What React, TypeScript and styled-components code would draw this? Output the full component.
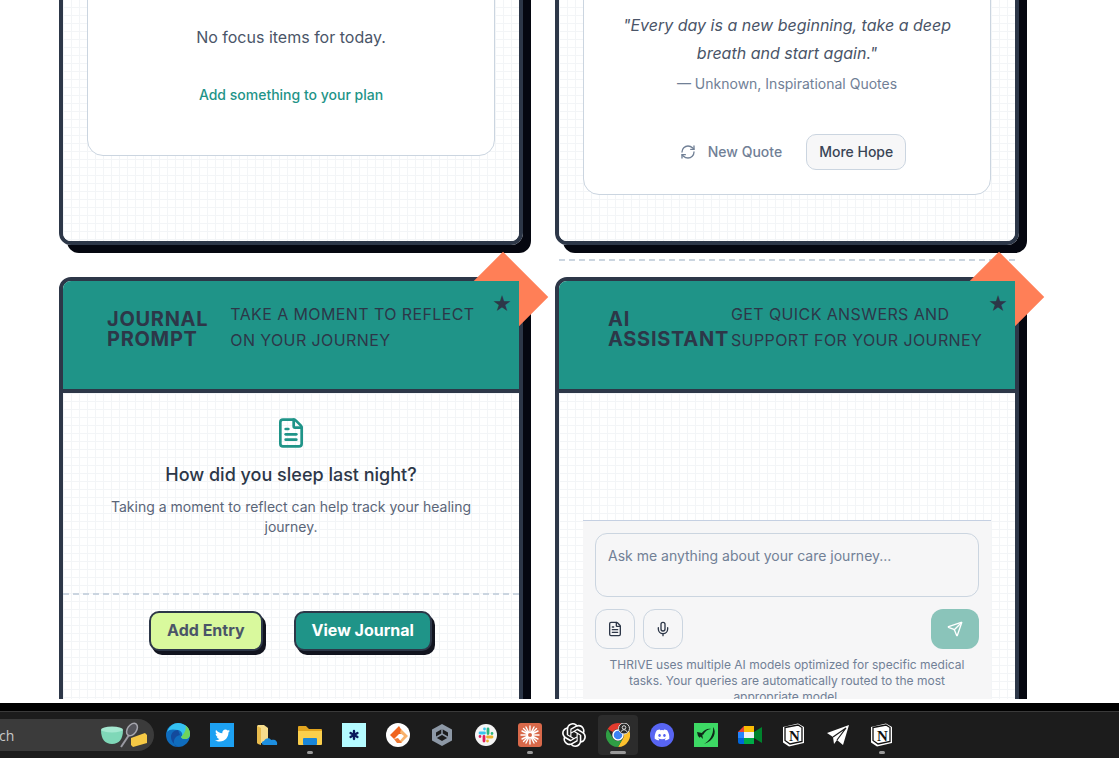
import { createGlobalStyle } from "styled-components";
import styled from "styled-components";
import { FileText, Mic, RefreshCw, Send, Asterisk } from "lucide-react";
import { FaDiscord, FaTwitter } from "react-icons/fa";
import { SiOpenai } from "react-icons/si";

const GlobalStyle = createGlobalStyle`
  html, body {
    margin: 0;
    padding: 0;
    background: #fff;
    font-family: Inter, "Liberation Sans", sans-serif;
  }
`;

const Screen = styled.div`
  height: 758px;
  display: flex;
  flex-direction: column;
  overflow: hidden;
`;

const Viewport = styled.div`
  height: 699px;
  margin-bottom: 4px;
  flex: none;
  overflow: hidden;
`;

const CardGrid = styled.div`
  display: grid;
  grid-template-columns: 464px 464px;
  grid-template-rows: 306px 480px;
  gap: 32px;
  margin: -61px 0 0 59px;
`;

const Card = styled.section<{ $divider?: boolean }>`
  position: relative;
  display: flex;
  flex-direction: column;
  box-sizing: border-box;
  border: 4px solid #2d3748;
  border-radius: 12px;
  box-shadow: 8px 8px 0 #050710;

  &::after {
    content: "";
    display: ${(p) => (p.$divider ? "block" : "none")};
    position: absolute;
    left: 0;
    right: 0;
    bottom: -20px;
    border-top: 2px dashed #cbd5e0;
  }
`;

const Diamond = styled.div`
  position: absolute;
  top: -16px;
  right: -16px;
  width: 64px;
  height: 64px;
  background: #ff7f57;
  transform: rotate(45deg);
`;

const Header = styled.header<{ $inset: number; $gap: number }>`
  position: relative;
  z-index: 1;
  flex: none;
  height: 108px;
  box-sizing: content-box;
  display: flex;
  align-items: flex-start;
  gap: ${(p) => p.$gap}px;
  padding-left: ${(p) => p.$inset}px;
  background: #1f9488;
  border-bottom: 4px solid #2d3748;
  border-top-left-radius: 8px;
  color: #2d3748;
`;

const HeaderTitle = styled.h2`
  flex: none;
  width: min-content;
  margin: 28px 0 0;
  font-size: 20px;
  line-height: 20px;
  font-weight: 700;
  letter-spacing: 0.7px;
  text-transform: uppercase;
`;

const HeaderSub = styled.p`
  width: 262px;
  margin: 20px 0 0;
  font-size: 16px;
  line-height: 26px;
  letter-spacing: 0.4px;
  text-transform: uppercase;
`;

const Star = styled.span`
  position: absolute;
  top: 10px;
  right: 7px;
  font-family: "DejaVu Sans", sans-serif;
  font-size: 22px;
  line-height: 26px;
`;

const Body = styled.div<{ $pad?: boolean }>`
  flex: 1;
  min-height: 0;
  display: flex;
  flex-direction: column;
  padding: ${(p) => (p.$pad ? "24px 24px 0" : "0")};
  background-color: #fff;
  background-image: linear-gradient(#f3f5f7 1px, transparent 1px),
    linear-gradient(90deg, #f3f5f7 1px, transparent 1px);
  background-size: 8px 8px;
  border-radius: 0 0 8px 8px;
`;

const InnerBox = styled.div<{ $quote?: boolean }>`
  box-sizing: border-box;
  background: #fff;
  border: 1px solid #cbd5e0;
  border-radius: 16px;
  text-align: center;
  padding: ${(p) => (p.$quote ? "43px 24px 24px" : "57px 24px 50px")};
`;

const EmptyText = styled.p`
  margin: 0;
  font-size: 16px;
  line-height: 24px;
  color: #4a5568;
`;

const PlanLink = styled.a`
  display: block;
  margin-top: 36px;
  font-size: 14px;
  line-height: 20px;
  font-weight: 500;
  color: #1f9488;
`;

const Quote = styled.p`
  margin: 0;
  font-size: 16px;
  line-height: 28px;
  font-style: italic;
  color: #4a5568;
`;

const Attribution = styled.p`
  margin: 7px 0 0;
  font-size: 14px;
  line-height: 20px;
  color: #718096;
`;

const QuoteActions = styled.div`
  display: flex;
  justify-content: center;
  gap: 12px;
  margin-top: 40px;
`;

const GhostButton = styled.button`
  display: flex;
  align-items: center;
  gap: 12px;
  height: 36px;
  padding: 0 12px 1px;
  border: none;
  background: transparent;
  font: 500 14px Inter, sans-serif;
  color: #718096;
`;

const SoftButton = styled.button`
  height: 36px;
  padding: 0 12px 1px;
  border: 1px solid #cbd5e0;
  border-radius: 10px;
  background: #f7f7f8;
  font: 500 14px Inter, sans-serif;
  color: #3a4556;
`;

const Prompt = styled.div`
  display: flex;
  flex-direction: column;
  align-items: center;
  height: 200px;
  box-sizing: border-box;
  padding: 24px 24px 0;
  color: #1f9488;
  text-align: center;
`;

const PromptTitle = styled.h3`
  margin: 12px 0 0;
  font-size: 18px;
  line-height: 28px;
  font-weight: 500;
  color: #2d3748;
`;

const PromptText = styled.p`
  margin: 8px 0 0;
  font-size: 14px;
  line-height: 20px;
  color: #5a6578;
`;

const PromptActions = styled.div`
  display: flex;
  justify-content: center;
  gap: 31px;
  padding: 16px 1px 0 0;
  border-top: 2px dashed #cbd5e0;
`;

const ChunkyButton = styled.button<{ $primary?: boolean }>`
  height: 40px;
  padding: 0 16px 2px;
  border: 2px solid #2d3748;
  border-radius: 10px;
  box-shadow: 3px 4px 0 #12141f;
  background: ${(p) => (p.$primary ? "#1f9488" : "#d9f99d")};
  color: ${(p) => (p.$primary ? "#fff" : "#4a5568")};
  font: 700 16px Inter, sans-serif;
`;

const Composer = styled.div`
  margin: 127px 24px 0;
  padding: 12px 12px 0;
  background: #f6f6f7;
  border-top: 1px solid #c5d0e2;
`;

const FakeTextarea = styled.div`
  box-sizing: border-box;
  height: 64px;
  padding: 12px;
  border: 1px solid #cbd5e0;
  border-radius: 12px;
  font-size: 14px;
  line-height: 20px;
  color: #718096;
`;

const ComposerRow = styled.div`
  display: flex;
  gap: 8px;
  margin-top: 12px;
`;

const ToolButton = styled.button`
  display: flex;
  align-items: center;
  justify-content: center;
  width: 40px;
  height: 40px;
  padding: 0;
  background: transparent;
  border: 1px solid #cbd5e0;
  border-radius: 12px;
  color: #2d3748;
`;

const SendButton = styled.button`
  display: flex;
  align-items: center;
  justify-content: center;
  width: 48px;
  height: 40px;
  margin-left: auto;
  padding: 0;
  border: none;
  border-radius: 12px;
  background: #8ac4ba;
  color: #fff;
`;

const Disclaimer = styled.p`
  margin: 8px 0 0;
  font-size: 12px;
  line-height: 16px;
  text-align: center;
  color: #718096;
`;

const WindowEdge = styled.div`
  flex: none;
  height: 8px;
  background: #000;
`;

const Taskbar = styled.footer`
  flex: 1;
  display: flex;
  align-items: center;
  border-top: 1px solid #3a3a3a;
  background: #1c1c1c;
`;

const SearchPill = styled.div`
  flex: none;
  display: flex;
  align-items: center;
  justify-content: space-between;
  box-sizing: border-box;
  width: 214px;
  height: 32px;
  margin: 0 2px 0 -60px;
  padding: 0 6px 0 30px;
  border-radius: 16px;
  background: #3b3b3b;
  font: 14px "Open Sans", sans-serif;
  color: #c8c8c8;
`;

const TaskIcon = styled.div<{ $active?: boolean; $dot?: "short" | "long" }>`
  position: relative;
  flex: none;
  width: 44px;
  height: 40px;
  display: flex;
  align-items: center;
  justify-content: center;

  &::before {
    content: "";
    display: ${(p) => (p.$active ? "block" : "none")};
    position: absolute;
    inset: 0 2px;
    border-radius: 4px;
    background: #2c2c2c;
  }

  &::after {
    content: "";
    display: ${(p) => (p.$dot ? "block" : "none")};
    position: absolute;
    left: 50%;
    bottom: 1px;
    width: ${(p) => (p.$dot === "long" ? 16 : 6)}px;
    height: 3px;
    margin-left: ${(p) => (p.$dot === "long" ? -8 : -3)}px;
    border-radius: 2px;
    background: #9a9a9a;
  }

  svg {
    position: relative;
  }
`;

const IconTile = styled.div<{ $bg: string; $round?: boolean }>`
  position: relative;
  display: flex;
  align-items: center;
  justify-content: center;
  width: 24px;
  height: 24px;
  border-radius: ${(p) => (p.$round ? "50%" : "0")};
  background: ${(p) => p.$bg};
  color: #fff;
`;

const BakingArt = () => (
  <svg width="48" height="28" viewBox="0 0 48 28">
    <path d="M1 9h22c0 9-4 14-11 14S1 18 1 9z" fill="#7fd8b8" />
    <ellipse cx="12" cy="8.500" rx="11" ry="3" fill="#a4e8d0" />
    <path d="M21 26l8-12" stroke="#9a9aa2" strokeWidth="2" />
    <ellipse cx="32" cy="8.500" rx="4.500" ry="7" transform="rotate(35 32 8.500)" fill="#55555c" stroke="#a5a5ad" strokeWidth="1.500" />
    <path d="M31 17l14-5 2 2v8l-14 4-2-2z" fill="#f6c945" />
  </svg>
);

const EdgeIcon = () => (
  <svg width="24" height="24" viewBox="0 0 24 24">
    <circle cx="12" cy="12" r="12" fill="#0f6cbd" />
    <path d="M1 9C3 3 8 0 12 0c7 0 12 5 12 11 0 3-2 5-5 5-2 0-4-1-4-2 2-1 2-6-3-7C7 6 3 6 1 9z" fill="#35c1f1" />
    <path d="M15 14c1 2 3 2 4 2 3 0 5-2 5-5 0-4-2-7-5-9 2 3 0 8-4 12z" fill="#6fd35c" />
    <path d="M12 7c-4 0-7 3-7 7 0 4 3 8 8 10-5 0-7-6-3-10 1-1 3-2 4-2z" fill="#134a9c" />
  </svg>
);

const CloudFolderIcon = () => (
  <svg width="24" height="24" viewBox="0 0 24 24">
    <path d="M3 3l1-1h6l4 3v15H4l-1-1z" fill="#f6dc8c" />
    <path d="M3 3l4 2v17l-3-1-1-1z" fill="#e8bb4c" />
    <path d="M10 22c-3 0-3-4 0-4 1-3 6-4 7-1 4-1 7 1 6 5z" fill="#1d8fe0" />
  </svg>
);

const FolderIcon = () => (
  <svg width="24" height="24" viewBox="0 0 24 24">
    <path d="M0 4a1 1 0 0 1 1-1h7l3 3h12a1 1 0 0 1 1 1v3H0z" fill="#e2a51f" />
    <path d="M0 8h24v13a1 1 0 0 1-1 1H1a1 1 0 0 1-1-1z" fill="#fbcf4c" />
    <rect x="5" y="15" width="14" height="7" rx="1" fill="#1a86d8" />
  </svg>
);

const OrangeMarkIcon = () => (
  <svg width="24" height="24" viewBox="0 0 24 24">
    <circle cx="12" cy="12" r="12" fill="#fff" />
    <path d="M13 3L4 12l4 4 5-5h5z" fill="#f0641e" />
    <path d="M15 6l7 7-6 6-4 1 6-7-4-3z" fill="#f9b26a" />
    <path d="M8 16l3 4h5l-4-5z" fill="#ee7a35" />
  </svg>
);

const CubeHexIcon = () => (
  <svg width="22" height="24" viewBox="0 0 22 24" fill="none">
    <path d="M11 1l10 5.500v11L11 23 1 17.500v-11z" fill="#8d98a6" />
    <path d="M11 6l6 3.500v5L11 18l-6-3.500v-5z" fill="#1c1c1c" />
    <path d="M11 6v5l6 3.500M11 11l-6 3.500" stroke="#8d98a6" strokeWidth="1.500" />
  </svg>
);

const SlackIcon = () => (
  <svg width="24" height="24" viewBox="0 0 24 24" fill="none" strokeWidth="2.800" strokeLinecap="round">
    <circle cx="12" cy="12" r="11" fill="#f5f5f5" />
    <path d="M10.500 6v0M10.500 10H6" stroke="#36c5f0" />
    <path d="M14 6v4.500M18 10.500h0" stroke="#2eb67d" />
    <path d="M13.500 18v0M13.500 14H18" stroke="#ecb22e" />
    <path d="M10 18v-4.500M6 13.500h0" stroke="#e01e5a" />
  </svg>
);

const BurstIcon = () => (
  <svg width="24" height="24" viewBox="0 0 24 24" stroke="#fff" strokeWidth="1.400" strokeLinecap="round">
    <rect width="24" height="24" rx="3" fill="#d9694a" stroke="none" />
    <path d="M12 3v18M3 12h18M5.500 5.500l13 13M18.500 5.500l-13 13M8 4l8 16M16 4L8 20M4 8l16 8M20 8L4 16" />
    <circle cx="12" cy="12" r="2" fill="#d9694a" stroke="none" />
  </svg>
);

const ChromeIcon = () => (
  <svg width="24" height="24" viewBox="0 0 24 24">
    <path d="M12 0a12 12 0 0 1 10.400 6H12a6 6 0 0 0-5.200 3L1.600 6A12 12 0 0 1 12 0z" fill="#e33b2e" />
    <path d="M22.400 6A12 12 0 0 1 12 24l5.200-9A6 6 0 0 0 17.200 9z" fill="#fbc02d" />
    <path d="M1.600 6A12 12 0 0 0 12 24l5.200-9a6 6 0 0 1-10.400 0z" fill="#2f9e44" />
    <circle cx="12" cy="12" r="5" fill="#3b82f6" stroke="#fff" strokeWidth="1.500" />
    <circle cx="18" cy="5.500" r="5.500" fill="#2a2a2a" stroke="#ddd" strokeWidth="1" />
    <circle cx="18" cy="4.500" r="1.800" fill="none" stroke="#ddd" strokeWidth="1" />
    <path d="M15 9c.5-3 5.500-3 6 0" fill="none" stroke="#ddd" strokeWidth="1" />
  </svg>
);

const SwirlIcon = () => (
  <svg width="24" height="24" viewBox="0 0 24 24">
    <rect width="24" height="24" fill="#3dd964" />
    <path d="M3 9l5 1 1 6-2-2c-1-1-1 1-1 1L4 13z" fill="#0e2a18" />
    <path d="M7 11c3-5 8-6 10-5-3 0-6 2-8 6z" fill="#0e2a18" />
    <path d="M19 4c4 5 1 14-9 17 5-3 10-9 9-17z" fill="#0e2a18" />
  </svg>
);

const MeetIcon = () => (
  <svg width="24" height="24" viewBox="0 0 24 24">
    <path d="M6 3h10v6H6z" fill="#fbbc04" />
    <path d="M0 9l6-6v6z" fill="#ea4335" />
    <path d="M0 9h6v6H0z" fill="#2684fc" />
    <path d="M0 15h6v6H2a2 2 0 0 1-2-2z" fill="#0066da" />
    <path d="M6 15h10v6H6z" fill="#00ac47" />
    <path d="M16 9l8-5v16l-8-5z" fill="#00832d" />
    <path d="M16 9v6H6V9z" fill="#eef1f5" />
  </svg>
);

const NotionIcon = () => (
  <svg width="24" height="24" viewBox="0 0 24 24">
    <path d="M1 4l15-3.500 6 3.500v16l-15 3.500-6-4z" fill="#fff" />
    <path d="M3 4.500l13-2.500 4 2.500v14l-12 2.500-5-3.500z" fill="#fff" stroke="#111" strokeWidth="1.300" />
    <text x="12.500" y="18" textAnchor="middle" fontFamily="Liberation Serif, serif" fontWeight="700" fontSize="15" fill="#111">
      N
    </text>
  </svg>
);

const PlaneIcon = () => (
  <svg width="24" height="24" viewBox="0 0 24 24">
    <path d="M1 10L23 2l-6 20-6-5-3 4-1-7z" fill="#fff" />
    <path d="M7 14L20 5l-9 12" fill="none" stroke="#1c1c1c" strokeWidth="1.200" />
  </svg>
);

export default function App() {
  return (
    <Screen>
      <GlobalStyle />
      <Viewport>
        <CardGrid>
          <Card>
            <Body $pad>
              <InnerBox>
                <EmptyText>No focus items for today.</EmptyText>
                <PlanLink>Add something to your plan</PlanLink>
              </InnerBox>
            </Body>
          </Card>

          <Card $divider>
            <Body $pad>
              <InnerBox $quote>
                <Quote>"Every day is a new beginning, take a deep breath and start again."</Quote>
                <Attribution>— Unknown, Inspirational Quotes</Attribution>
                <QuoteActions>
                  <GhostButton>
                    <RefreshCw size={16} />
                    New Quote
                  </GhostButton>
                  <SoftButton>More Hope</SoftButton>
                </QuoteActions>
              </InnerBox>
            </Body>
          </Card>

          <Card>
            <Diamond />
            <Header $inset={44} $gap={22}>
              <HeaderTitle>Journal Prompt</HeaderTitle>
              <HeaderSub>Take a moment to reflect on your journey</HeaderSub>
              <Star>★</Star>
            </Header>
            <Body>
              <Prompt>
                <FileText size={32} />
                <PromptTitle>How did you sleep last night?</PromptTitle>
                <PromptText>Taking a moment to reflect can help track your healing journey.</PromptText>
              </Prompt>
              <PromptActions>
                <ChunkyButton>Add Entry</ChunkyButton>
                <ChunkyButton $primary>View Journal</ChunkyButton>
              </PromptActions>
            </Body>
          </Card>

          <Card>
            <Diamond />
            <Header $inset={49} $gap={2}>
              <HeaderTitle>AI Assistant</HeaderTitle>
              <HeaderSub>Get quick answers and support for your journey</HeaderSub>
              <Star>★</Star>
            </Header>
            <Body>
              <Composer>
                <FakeTextarea>Ask me anything about your care journey...</FakeTextarea>
                <ComposerRow>
                  <ToolButton>
                    <FileText size={16} />
                  </ToolButton>
                  <ToolButton>
                    <Mic size={16} />
                  </ToolButton>
                  <SendButton>
                    <Send size={16} />
                  </SendButton>
                </ComposerRow>
                <Disclaimer>
                  THRIVE uses multiple AI models optimized for specific medical tasks. Your queries are automatically
                  routed to the most appropriate model.
                </Disclaimer>
              </Composer>
            </Body>
          </Card>
        </CardGrid>
      </Viewport>

      <WindowEdge />

      <Taskbar>
        <SearchPill>
          Search
          <BakingArt />
        </SearchPill>
        <TaskIcon>
          <EdgeIcon />
        </TaskIcon>
        <TaskIcon>
          <IconTile $bg="#1da1f2">
            <FaTwitter size={15} />
          </IconTile>
        </TaskIcon>
        <TaskIcon>
          <CloudFolderIcon />
        </TaskIcon>
        <TaskIcon $dot="short">
          <FolderIcon />
        </TaskIcon>
        <TaskIcon>
          <IconTile $bg="#b4fbff">
            <Asterisk size={16} color="#0a1a5c" strokeWidth={3.500} />
          </IconTile>
        </TaskIcon>
        <TaskIcon>
          <OrangeMarkIcon />
        </TaskIcon>
        <TaskIcon>
          <CubeHexIcon />
        </TaskIcon>
        <TaskIcon>
          <SlackIcon />
        </TaskIcon>
        <TaskIcon $dot="short">
          <BurstIcon />
        </TaskIcon>
        <TaskIcon>
          <SiOpenai size={24} color="#fff" />
        </TaskIcon>
        <TaskIcon $active $dot="long">
          <ChromeIcon />
        </TaskIcon>
        <TaskIcon>
          <IconTile $bg="#5865f2" $round>
            <FaDiscord size={16} />
          </IconTile>
        </TaskIcon>
        <TaskIcon>
          <SwirlIcon />
        </TaskIcon>
        <TaskIcon>
          <MeetIcon />
        </TaskIcon>
        <TaskIcon>
          <NotionIcon />
        </TaskIcon>
        <TaskIcon>
          <PlaneIcon />
        </TaskIcon>
        <TaskIcon $dot="short">
          <NotionIcon />
        </TaskIcon>
      </Taskbar>
    </Screen>
  );
}
